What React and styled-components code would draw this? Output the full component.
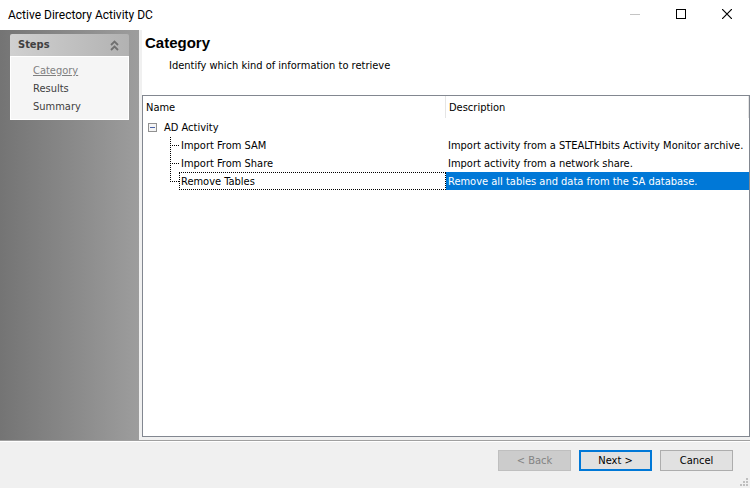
import React, { useState } from 'react'
import styled, { createGlobalStyle, css } from 'styled-components';

const GlobalStyle = createGlobalStyle`
  * {
    box-sizing: border-box;
  }

  body {
    margin: 0;
    background: #f0f0f0;
    color: #000;
    font: 11px/18px "DejaVu Sans Condensed", "DejaVu Sans", Tahoma, sans-serif;
  }

  button {
    font: inherit;
  }
`;

const Window = styled.div`
  display: flex;
  flex-direction: column;
  min-height: 100vh;
`;

const TitleBar = styled.header`
  display: flex;
  justify-content: space-between;
  height: 30px;
  padding-left: 8px;
  background: #fff;
  font: 12px/30px Roboto, "Segoe UI", sans-serif;
`;

const WindowControls = styled.div`
  display: flex;
`;

const ControlButton = styled.button`
  display: flex;
  align-items: center;
  justify-content: center;
  width: 46px;
  height: 28px;
  padding: 0;
  border: 0;
  background: transparent;
  color: #000;

  &:disabled {
    color: #c4c4c4;
  }
`;

const Body = styled.div`
  display: flex;
  flex: 1;
  border-bottom: 1px solid #a0a0a0;
`;

const Sidebar = styled.aside`
  width: 139px;
  padding: 4px 10px;
  background: linear-gradient(to right, #747474, #9d9d9d);
`;

const StepsHeader = styled.button`
  display: flex;
  align-items: center;
  justify-content: space-between;
  width: 100%;
  height: 22px;
  padding: 0 10px 0 8px;
  border: 0;
  border-radius: 2px 2px 0 0;
  background: linear-gradient(to right, #d0d0d0, #b2b2b2);
  color: #404040;
  font-weight: bold;
`;

const StepList = styled.ol`
  margin: 0;
  padding: 5px 22px 3px;
  border: 1px solid #fff;
  background: #f5f5f5;
  list-style: none;
`;

const StepLink = styled.a`
  color: #404040;
  text-decoration: none;

  ${props => props.$current && css`
    color: #808080;
    text-decoration: underline;
  `}
`;

const Main = styled.main`
  display: flex;
  flex: 1;
  flex-direction: column;
  padding: 0 0 3px 3px;
`;

const PageHeader = styled.div`
  height: 65px;
  padding: 4px 3px;
  background: #fff;
`;

const PageTitle = styled.h1`
  margin: 0;
  font: bold 15px/18px "Liberation Sans", Arial, sans-serif;
`;

const PageHint = styled.p`
  margin: 5px 0 0 24px;
`;

const TreeFrame = styled.div`
  flex: 1;
  border: 1px solid #828790;
  background: #fff;
`;

const Tree = styled.table`
  width: 100%;
  border-collapse: separate;
  border-spacing: 0;
  table-layout: fixed;
  line-height: 16px;
`;

const ColumnHeader = styled.th`
  width: ${props => props.$width || 'auto'};
  height: 22px;
  padding: 2px 3px 0;
  border-right: 1px solid #e5e5e5;
  font-weight: normal;
  text-align: left;
`;

const Row = styled.tr`
  height: 18px;
  cursor: default;
`;

const Cell = styled.td`
  padding: 2px 0 0 2px;
  white-space: nowrap;

  ${props => props.$selected && css`
    background: #0078d7;
    color: #fff;
  `}
`;

const NameCell = styled.td`
  padding: 0;
`;

const GroupName = styled.div`
  display: flex;
  align-items: center;
  gap: 7px;
  padding-left: 5px;
`;

const GroupLabel = styled.span`
  padding-top: 2px;
`;

const Expander = styled.button`
  display: flex;
  padding: 0;
  border: 0;
  background: transparent;
`;

const ItemName = styled.div`
  display: flex;
  height: 18px;
  padding-left: 27px;
`;

const ItemLabel = styled.span`
  flex: 1;
  padding: 1px 0 0 1px;
  border: 1px dotted ${props => props.$focused ? '#000' : 'transparent'};
`;

const Footer = styled.footer`
  position: relative;
  display: flex;
  justify-content: flex-end;
  gap: 8px;
  padding: 8px 17px 17px;
  border-top: 1px solid #fff;
`;

const DialogButton = styled.button`
  display: flex;
  align-items: center;
  justify-content: center;
  width: 73px;
  height: 21px;
  padding: 1px 0 0;
  border: ${props => props.$primary ? '2px solid #0078d7' : '1px solid #adadad'};
  background: #e1e1e1;
  color: #000;

  &:disabled {
    border-color: #bfbfbf;
    background: #ccc;
    color: #838383;
  }
`;

const SizeGrip = styled.svg`
  position: absolute;
  right: 2px;
  bottom: 2px;
`;

const steps = ['Category', 'Results', 'Summary'];

const tasks = [
  { name: 'Import From SAM', description: 'Import activity from a STEALTHbits Activity Monitor archive.' },
  { name: 'Import From Share', description: 'Import activity from a network share.' },
  { name: 'Remove Tables', description: 'Remove all tables and data from the SA database.' }
];

const gripDots = [[6, 0], [3, 3], [6, 3], [0, 6], [3, 6], [6, 6]];

const Branch = ({ last }) => (
  <svg width="9" height="18" shapeRendering="crispEdges" aria-hidden="true">
    <path
      d={last ? 'M.5 1V10' : 'M.5 1V18'}
      stroke="#000"
      strokeDasharray="1 1"
    />
    <path d="M0 9.5H9" stroke="#000" strokeDasharray="1 1" />
  </svg>
);

const App = () => {
  const [selected, setSelected] = useState(2);
  const [expanded, setExpanded] = useState(true);
  const [stepsOpen, setStepsOpen] = useState(true);

  return (
    <Window>
      <GlobalStyle />
      <TitleBar>
        <span>Active Directory Activity DC</span>
        <WindowControls>
          <ControlButton aria-label="Minimize" disabled>
            <svg width="10" height="10" shapeRendering="crispEdges">
              <path d="M0 5.5H10" stroke="currentColor" />
            </svg>
          </ControlButton>
          <ControlButton aria-label="Maximize">
            <svg width="10" height="10" shapeRendering="crispEdges">
              <rect x=".5" y=".5" width="9" height="9" fill="none" stroke="currentColor" />
            </svg>
          </ControlButton>
          <ControlButton aria-label="Close">
            <svg width="10" height="10">
              <path d="M0 0L10 10M10 0L0 10" stroke="currentColor" strokeWidth="1.2" />
            </svg>
          </ControlButton>
        </WindowControls>
      </TitleBar>
      <Body>
        <Sidebar>
          <StepsHeader aria-expanded={stepsOpen} onClick={() => setStepsOpen(!stepsOpen)}>
            Steps
            <svg width="9" height="11" fill="none" stroke="#707070" strokeWidth="1.8">
              <path d="M1 5L4.5 1.5L8 5M1 10L4.5 6.5L8 10" />
            </svg>
          </StepsHeader>
          {stepsOpen && (
            <StepList>
              {steps.map((step, i) => (
                <li key={step}>
                  <StepLink href={`#${step.toLowerCase()}`} $current={i === 0}>{step}</StepLink>
                </li>
              ))}
            </StepList>
          )}
        </Sidebar>
        <Main>
          <PageHeader>
            <PageTitle>Category</PageTitle>
            <PageHint>Identify which kind of information to retrieve</PageHint>
          </PageHeader>
          <TreeFrame>
            <Tree>
              <thead>
                <tr>
                  <ColumnHeader $width="303px">Name</ColumnHeader>
                  <ColumnHeader>Description</ColumnHeader>
                </tr>
              </thead>
              <tbody>
                <Row>
                  <NameCell colSpan={2}>
                    <GroupName>
                      <Expander aria-label="Toggle AD Activity" onClick={() => setExpanded(!expanded)}>
                        <svg width="9" height="9" shapeRendering="crispEdges">
                          <rect x=".5" y=".5" width="8" height="8" fill="#f4f4f4" stroke="#919191" />
                          <path d={expanded ? 'M2 4.5H7' : 'M2 4.5H7M4.5 2V7'} stroke="#4b63a7" />
                        </svg>
                      </Expander>
                      <GroupLabel>AD Activity</GroupLabel>
                    </GroupName>
                  </NameCell>
                </Row>
                {expanded && tasks.map((task, i) => (
                  <Row key={task.name} onClick={() => setSelected(i)}>
                    <NameCell>
                      <ItemName>
                        <Branch last={i === tasks.length - 1} />
                        <ItemLabel $focused={i === selected}>{task.name}</ItemLabel>
                      </ItemName>
                    </NameCell>
                    <Cell $selected={i === selected}>{task.description}</Cell>
                  </Row>
                ))}
              </tbody>
            </Tree>
          </TreeFrame>
        </Main>
      </Body>
      <Footer>
        <DialogButton disabled>&lt; Back</DialogButton>
        <DialogButton $primary>Next &gt;</DialogButton>
        <DialogButton>Cancel</DialogButton>
        <SizeGrip width="8" height="8" fill="#bfbfbf" shapeRendering="crispEdges" aria-hidden="true">
          {gripDots.map(([x, y]) => (
            <rect key={`${x}-${y}`} x={x} y={y} width="2" height="2" />
          ))}
        </SizeGrip>
      </Footer>
    </Window>
  )
}

export default App;
